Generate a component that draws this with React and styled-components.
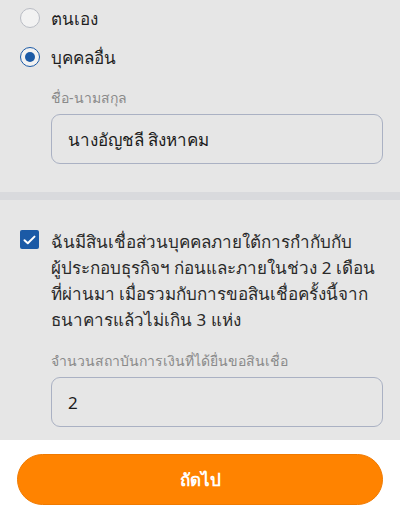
import React, { useState } from 'react';
import styled, { createGlobalStyle } from 'styled-components';

const GlobalStyle = createGlobalStyle`
body {
    margin: 0;
    background: #fff;
    font-family: "Noto Sans", "DejaVu Sans", sans-serif;
}
`;

const Page = styled.div`
width: 400px;
height: 520px;
display: flex;
flex-direction: column;
background: #fff;
`;

const Section = styled.div`
background: #e6e6e6;
display: flex;
flex-direction: column;
padding: ${(p) => p.$pad};
`;

const Divider = styled.div`
height: 8px;
background: #d9dadd;
`;

const RadioRow = styled.label`
display: flex;
align-items: center;
gap: 11px;
height: 36px;
padding-left: 20px;
margin-bottom: 3px;
font-size: 17px;
font-weight: 500;
color: #1f1f1f;
cursor: pointer;
`;

const RadioCircle = styled.span`
width: 20px;
height: 20px;
box-sizing: border-box;
border-radius: 50%;
border: 1.5px solid ${(p) => (p.$on ? '#1b5aa6' : '#b9bcc4')};
background: #f2f2f2;
display: flex;
align-items: center;
justify-content: center;

&::after {
    content: '';
    width: 10px;
    height: 10px;
    border-radius: 50%;
    background: #1b5aa6;
    display: ${(p) => (p.$on ? 'block' : 'none')};
}
`;

const Field = styled.div`
display: flex;
flex-direction: column;
gap: 6px;
padding: 0 17px 0 51px;
margin-top: ${(p) => p.$top || 0}px;
`;

const Label = styled.div`
font-size: 14px;
line-height: 20px;
color: #8a8a8a;
`;

const Input = styled.div`
height: 50px;
box-sizing: border-box;
border: 1.5px solid #aab1c3;
border-radius: 9px;
display: flex;
align-items: center;
padding-left: 16px;
font-size: 17px;
color: #1c1c1c;
`;

const CheckRow = styled.div`
display: flex;
align-items: flex-start;
gap: 12px;
padding: 0 17px 0 20px;
`;

const CheckBox = styled.span`
flex: none;
width: 19px;
height: 19px;
margin-top: 1px;
border-radius: 2px;
background: #1b5aa6;
display: flex;
align-items: center;
justify-content: center;
`;

const CheckText = styled.div`
font-size: 17px;
line-height: 26px;
color: #2a2a2a;
`;

const Footer = styled.div`
padding: 14px 17px 0;
`;

const NextButton = styled.button`
width: 100%;
height: 51px;
border: 1px solid #f07a00;
border-radius: 26px;
background: #ff8300;
color: #fff;
font-family: inherit;
font-size: 17px;
font-weight: 700;
cursor: pointer;
`;

export default function App() {
    const [who, setWho] = useState('other');

    return (
        <Page>
            <GlobalStyle />
            <Section $pad="0 0 28px">
                <RadioRow onClick={() => setWho('self')}>
                    <RadioCircle $on={who === 'self'} />
                    ตนเอง
                </RadioRow>
                <RadioRow onClick={() => setWho('other')}>
                    <RadioCircle $on={who === 'other'} />
                    บุคคลอื่น
                </RadioRow>
                <Field $top={10}>
                    <Label>ชื่อ-นามสกุล</Label>
                    <Input>นางอัญชลี สิงหาคม</Input>
                </Field>
            </Section>
            <Divider />
            <Section $pad="29px 0 13px">
                <CheckRow>
                    <CheckBox>
                        <svg width="13" height="10" viewBox="0 0 13 10">
                            <path d="M1.5 5.2 L4.8 8.3 L11.5 1.6" fill="none" stroke="#fff" strokeWidth="2" strokeLinecap="round" strokeLinejoin="round" />
                        </svg>
                    </CheckBox>
                    <CheckText>
                        ฉันมีสินเชื่อส่วนบุคคลภายใต้การกำกับกับ<br />
                        ผู้ประกอบธุรกิจฯ ก่อนและภายในช่วง 2 เดือน<br />
                        ที่ผ่านมา เมื่อรวมกับการขอสินเชื่อครั้งนี้จาก<br />
                        ธนาคารแล้วไม่เกิน 3 แห่ง
                    </CheckText>
                </CheckRow>
                <Field $top={18}>
                    <Label>จำนวนสถาบันการเงินที่ได้ยื่นขอสินเชื่อ</Label>
                    <Input>2</Input>
                </Field>
            </Section>
            <Footer>
                <NextButton>ถัดไป</NextButton>
            </Footer>
        </Page>
    );
}
